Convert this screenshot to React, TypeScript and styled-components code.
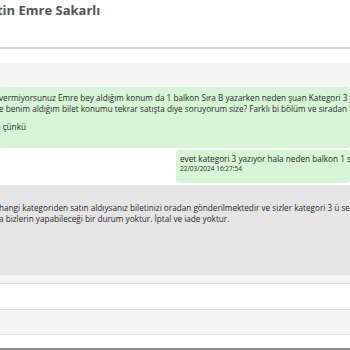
import { createGlobalStyle, styled } from "styled-components";

const GlobalStyle = createGlobalStyle`
  html, body {
    margin: 0;
    padding: 0;
    background: #ffffff;
  }
  body {
    font-family: "Open Sans", "Liberation Sans", sans-serif;
    color: #333333;
  }
`;

const Page = styled.div`
  width: 350px;
  height: 350px;
  overflow: hidden;
  display: flex;
  flex-direction: column;
  background: #ffffff;
`;

const Header = styled.div`
  height: 49px;
  border-bottom: 2px solid #d2d2d2;
  box-sizing: border-box;
  flex-shrink: 0;
`;

const Title = styled.h2`
  margin: 0 0 0 -23px;
  font-size: 13px;
  line-height: 20px;
  font-weight: 700;
  color: #555555;
  white-space: nowrap;
`;

const Spacer = styled.div<{ $h: number; $bg?: string }>`
  height: ${(p) => p.$h}px;
  background: ${(p) => p.$bg ?? "transparent"};
  flex-shrink: 0;
`;

const Row = styled.div<{ $bg: string; $h: number; $right?: boolean }>`
  height: ${(p) => p.$h}px;
  background: ${(p) => p.$bg};
  display: flex;
  padding: ${(p) => (p.$right ? "2px 0 2px 176px" : "0")};
  box-sizing: border-box;
  flex-shrink: 0;
  overflow: hidden;
`;

const Bubble = styled.div<{ $bg: string; $pad: string }>`
  background: ${(p) => p.$bg};
  padding: ${(p) => p.$pad};
  flex: 1;
  border-radius: 3px;
  overflow: hidden;
`;

const Line = styled.div<{ $shift?: number; $gap?: number }>`
  font-size: 8.2px;
  line-height: 11px;
  white-space: nowrap;
  margin-left: ${(p) => p.$shift ?? 0}px;
  margin-top: ${(p) => p.$gap ?? 0}px;
  color: #2a2a2a;
`;

const Stamp = styled.div`
  font-size: 6.5px;
  line-height: 10px;
  white-space: nowrap;
  color: #2a2a2a;
`;

const FooterBar = styled.div<{ $h: number; $bg: string }>`
  height: ${(p) => p.$h}px;
  background: ${(p) => p.$bg};
  border-bottom: 1px solid #dddddd;
  flex-shrink: 0;
`;

const BottomEdge = styled.div`
  flex: 1;
  background: #ffffff;
  border-bottom: 2px solid #8a8a8a;
`;

export default function App() {
  return (
    <>
      <GlobalStyle />
      <Page>
        <Header>
          <Title>Metin Emre Sakarlı</Title>
        </Header>
        <Spacer $h={14} />
        <Spacer $h={24} $bg="#f5f5f5" />
        <Row $bg="#f5f5f5" $h={61}>
          <Bubble $bg="#d5f5d5" $pad="5px 0 0 0">
            <Line $shift={-1}>vermiyorsunuz Emre bey aldığım konum da 1 balkon Sıra B yazarken neden şuan Kategori 3 yazıyor</Line>
            <Line $shift={-1}>e benim aldığım bilet konumu tekrar satışta diye soruyorum size? Farklı bi bölüm ve sıradan bilet</Line>
            <Line $shift={-4} $gap={7}>a çünkü</Line>
          </Bubble>
        </Row>
        <Row $bg="#ffffff" $h={37} $right>
          <Bubble $bg="#d5f5d5" $pad="3px 0 0 4px">
            <Line>evet kategori 3 yazıyor hala neden balkon 1 sıra B yazmıyor</Line>
            <Stamp>22/03/2024 16:27:54</Stamp>
          </Bubble>
        </Row>
        <Row $bg="#e5e5e5" $h={90}>
          <Bubble $bg="#e5e5e5" $pad="17px 0 0 0">
            <Line $shift={-1}>hangi kategoriden satın aldıysanız biletinizi oradan gönderilmektedir ve sizler kategori 3 ü seçtiniz</Line>
            <Line $shift={-1}>a bizlerin yapabileceği bir durum yoktur. İptal ve iade yoktur.</Line>
          </Bubble>
        </Row>
        <FooterBar $h={8} $bg="#f3f3f3" />
        <FooterBar $h={25} $bg="#ffffff" />
        <FooterBar $h={24} $bg="#f5f5f5" />
        <BottomEdge />
      </Page>
    </>
  );
}
